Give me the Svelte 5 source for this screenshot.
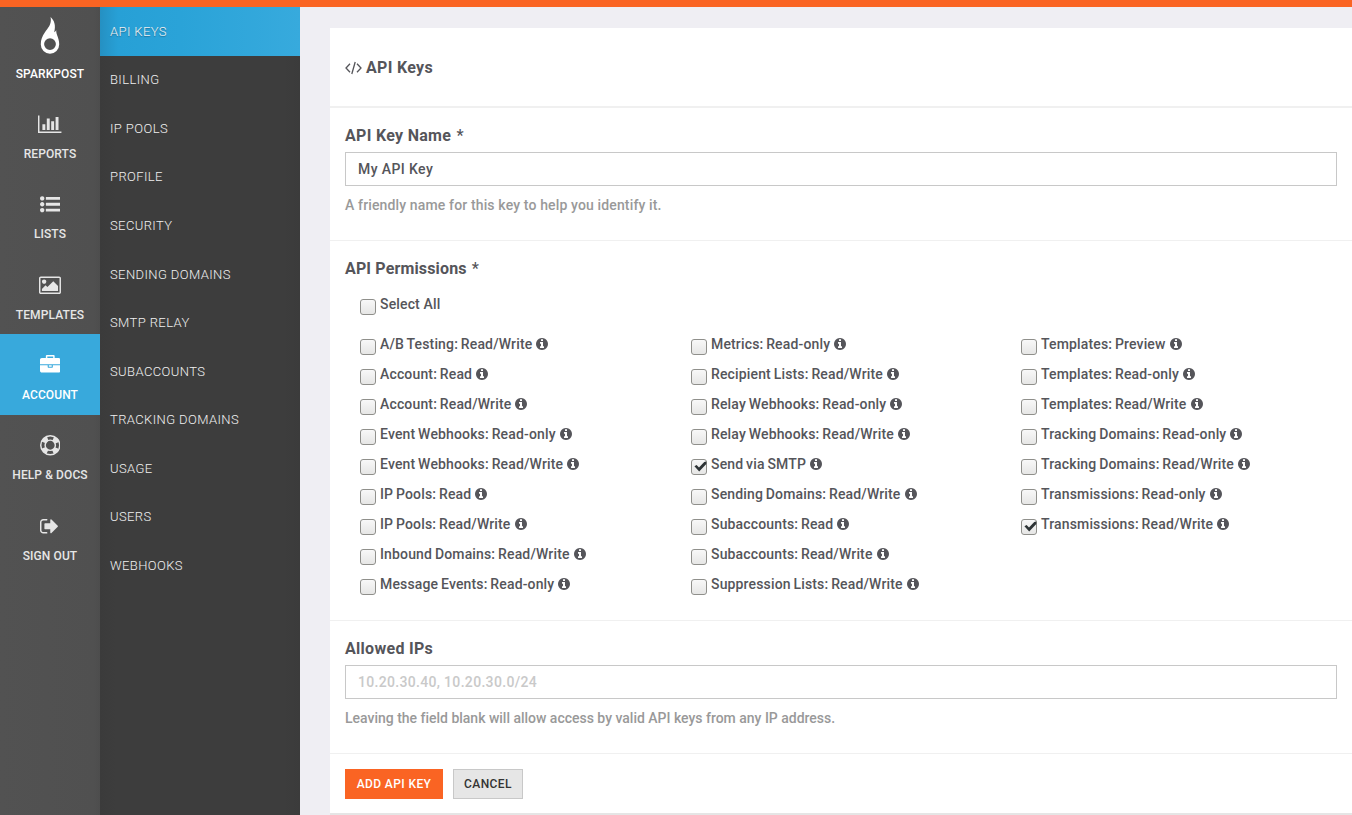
<script>
  const nav = [
    { label: 'REPORTS', icon: 'chart', w: 2048, p: 'M640 896v512h-256v-512h256zm384-512v1024h-256v-1024h256zm1024 1152v128h-2048v-1536h128v1408h1920zm-640-896v768h-256v-768h256zm384-384v1152h-256v-1152h256z' },
    { label: 'LISTS', icon: 'list', w: 1792, p: 'M384 1408q0 80-56 136t-136 56-136-56-56-136 56-136 136-56 136 56 56 136zm0-512q0 80-56 136t-136 56-136-56-56-136 56-136 136-56 136 56 56 136zm1408 416v192q0 13-9.5 22.5t-22.5 9.5h-1216q-13 0-22.5-9.5t-9.5-22.5v-192q0-13 9.5-22.5t22.5-9.5h1216q13 0 22.5 9.5t9.5 22.5zm-1408-928q0 80-56 136t-136 56-136-56-56-136 56-136 136-56 136 56 56 136zm1408 416v192q0 13-9.5 22.5t-22.5 9.5h-1216q-13 0-22.5-9.5t-9.5-22.5v-192q0-13 9.5-22.5t22.5-9.5h1216q13 0 22.5 9.5t9.5 22.5zm0-512v192q0 13-9.5 22.5t-22.5 9.5h-1216q-13 0-22.5-9.5t-9.5-22.5v-192q0-13 9.5-22.5t22.5-9.5h1216q13 0 22.5 9.5t9.5 22.5z' },
    { label: 'TEMPLATES', icon: 'image', w: 1920, p: 'M640 576q0 80-56 136t-136 56-136-56-56-136 56-136 136-56 136 56 56 136zm1024 384v448h-1408v-192l320-320 160 160 512-512zm96-704h-1600q-13 0-22.5 9.5t-9.5 22.5v1216q0 13 9.5 22.5t22.5 9.5h1600q13 0 22.5-9.5t9.5-22.5v-1216q0-13-9.5-22.5t-22.5-9.5zm160 32v1216q0 66-47 113t-113 47h-1600q-66 0-113-47t-47-113v-1216q0-66 47-113t113-47h1600q66 0 113 47t47 113z' },
    { label: 'ACCOUNT', icon: 'briefcase', w: 1792, active: true, p: 'M640 256h512v-128h-512v128zm1152 640v480q0 66-47 113t-113 47h-1472q-66 0-113-47t-47-113v-480h672v160q0 26 19 45t45 19h320q26 0 45-19t19-45v-160h672zm-768 0v128h-256v-128h256zm768-480v384h-1792v-384q0-66 47-113t113-47h352v-160q0-40 28-68t68-28h576q40 0 68 28t28 68v160h352q66 0 113 47t47 113z' },
    { label: 'HELP & DOCS', icon: 'ring', w: 1792, p: '' },
    { label: 'SIGN OUT', icon: 'out', w: 1664, p: 'M640 1440q0 4 1 20t.5 26.5-3 23.5-10 19.5-20.5 6.5h-320q-119 0-203.5-84.5t-84.5-203.5v-704q0-119 84.5-203.5t203.5-84.5h320q13 0 22.5 9.5t9.5 22.5q0 4 1 20t.5 26.5-3 23.5-10 19.5-20.5 6.5h-320q-66 0-113 47t-47 113v704q0 66 47 113t113 47h312l11.5 1 11.5 3 8 5.5 7 9 2 13.5zm928-544q0 26-19 45l-544 544q-19 19-45 19t-45-19-19-45v-288h-448q-26 0-45-19t-19-45v-384q0-26 19-45t45-19h448v-288q0-26 19-45t45-19 45 19l544 544q19 19 19 45z' },
  ];
  const sub = ['API KEYS', 'BILLING', 'IP POOLS', 'PROFILE', 'SECURITY', 'SENDING DOMAINS', 'SMTP RELAY', 'SUBACCOUNTS', 'TRACKING DOMAINS', 'USAGE', 'USERS', 'WEBHOOKS'];
  const columns = [
    ['A/B Testing: Read/Write', 'Account: Read', 'Account: Read/Write', 'Event Webhooks: Read-only', 'Event Webhooks: Read/Write', 'IP Pools: Read', 'IP Pools: Read/Write', 'Inbound Domains: Read/Write', 'Message Events: Read-only'],
    ['Metrics: Read-only', 'Recipient Lists: Read/Write', 'Relay Webhooks: Read-only', 'Relay Webhooks: Read/Write', 'Send via SMTP', 'Sending Domains: Read/Write', 'Subaccounts: Read', 'Subaccounts: Read/Write', 'Suppression Lists: Read/Write'],
    ['Templates: Preview', 'Templates: Read-only', 'Templates: Read/Write', 'Tracking Domains: Read-only', 'Tracking Domains: Read/Write', 'Transmissions: Read-only', 'Transmissions: Read/Write'],
  ];
  const checked = new Set(['Send via SMTP', 'Transmissions: Read/Write']);
  let name = $state('My API Key');
</script>

{#snippet box(on)}
  <span class="box" role="checkbox" aria-checked={on} tabindex="-1">
    {#if on}
      <svg viewBox="0 0 16 16"><path d="M3.400 7.200 5.600 6.100 8 8.600 13.200 3 15.300 2.400V5L8.200 12.600Z" fill="#2e3436" /></svg>
    {/if}
  </span>
{/snippet}

<div class="page">
  <nav class="main-nav">
    <a class="brand" href="#home">
      <svg class="flame" viewBox="0 0 20 37"><path fill-rule="evenodd" d="M10.600 0C14.400 3.500 16 8.500 14.200 15.200C15.300 14.800 15.800 13.900 16.200 13C16 18 19.200 20.500 19.200 27.500A9.200 9.200 0 0 1 .8 27.500C.8 22.500 2.200 19.500 4.800 15.500C7.800 11 12 7.500 10.600 0ZM10 21.200A5.900 5.900 0 1 0 10 33A5.900 5.900 0 1 0 10 21.200Z" /></svg>
      <span>SPARKPOST</span>
    </a>
    {#each nav as n}
      <a class="item" class:active={n.active} href="#{n.icon}">
        <svg class="nav-icon" viewBox="0 0 {n.w} 1792" style="width:{n.w * 0.01145}px">
          {#if n.icon === 'ring'}
            <circle cx="896" cy="896" r="832" fill="none" stroke="currentColor" stroke-width="128" />
            <circle cx="896" cy="896" r="448" fill="none" stroke="currentColor" stroke-width="128" />
            <circle cx="896" cy="896" r="640" fill="none" stroke="currentColor" stroke-width="400" stroke-dasharray="502.650 502.650" stroke-dashoffset="-251.330" />
          {:else}
            <path d={n.p} />
          {/if}
        </svg>
        <span>{n.label}</span>
      </a>
    {/each}
  </nav>

  <nav class="sub-nav">
    {#each sub as s, i}
      <a class:active={i === 0} href="#sub-{i}">{s}</a>
    {/each}
  </nav>

  <main>
    <form class="panel">
      <header>
        <svg class="code" viewBox="0 0 17 14"><path d="M5 2.800 1 7 5 11.200M12 2.800 16 7 12 11.200M10.200 1 6.800 13" fill="none" stroke="currentColor" stroke-width="1.300" /></svg>
        <h1>API Keys</h1>
      </header>
      <section class="name">
        <h2>API Key Name <i>*</i></h2>
        <input type="text" bind:value={name} />
        <p>A friendly name for this key to help you identify it.</p>
      </section>
      <section class="perms">
        <h2>API Permissions <i>*</i></h2>
        <div class="perm all">{@render box(false)}<span class="t">Select All</span></div>
        <div class="columns">
          {#each columns as col}
            <div class="col">
              {#each col as p}
                <div class="perm">
                  {@render box(checked.has(p))}<span class="t">{p}</span>
                  <svg class="info" viewBox="0 0 1536 1536"><path transform="translate(-128 -128)" d="M1152 1376v-160q0-14-9-23t-23-9h-96v-512q0-14-9-23t-23-9h-320q-14 0-23 9t-9 23v160q0 14 9 23t23 9h96v320h-96q-14 0-23 9t-9 23v160q0 14 9 23t23 9h448q14 0 23-9t9-23zm-128-896v-160q0-14-9-23t-23-9h-192q-14 0-23 9t-9 23v160q0 14 9 23t23 9h192q14 0 23-9t9-23zm640 416q0 209-103 385.500t-279.500 279.500-385.500 103-385.500-103-279.500-279.500-103-385.500 103-385.500 279.500-279.500 385.500-103 385.500 103 279.500 279.500 103 385.500z" /></svg>
                </div>
              {/each}
            </div>
          {/each}
        </div>
      </section>
      <section class="ips">
        <h2>Allowed IPs</h2>
        <input type="text" placeholder="10.20.30.40, 10.20.30.0/24" />
        <p class="tight">Leaving the field blank will allow access by valid API keys from any IP address.</p>
      </section>
      <footer>
        <button type="button" class="primary">ADD API KEY</button>
        <button type="button">CANCEL</button>
      </footer>
    </form>
  </main>
</div>

<style>
  :global(body) { margin: 0; overflow: hidden; }
  * { box-sizing: border-box; }
  svg { display: block; fill: currentColor; flex: none; }
  a { text-decoration: none; }
  .page {
    height: 815px; overflow: hidden; display: grid; grid-template-columns: 100px 200px 1fr;
    border-top: 7px solid #fa6423; background: #efeef3; color: #55555a;
    font-family: Roboto, sans-serif; font-weight: 500; font-size: 14px;
  }
  .main-nav { background: linear-gradient(90deg, #525252, #505050 94%, #4d4d4d); font-size: 12px; letter-spacing: .1px; }
  .main-nav a { display: flex; flex-direction: column; align-items: center; color: #e6e6e6; height: 80.330px; line-height: 16px; }
  .main-nav .brand { color: #fff; height: 86.400px; padding-top: 10px; }
  .flame { width: 20px; height: 37px; margin-bottom: 12px; }
  .item { padding-top: 20.500px; }
  .nav-icon { height: 20.520px; margin-bottom: 11.700px; }
  .main-nav .active { background: #38a9dc; color: #fff; }
  .sub-nav { background: linear-gradient(90deg, #3b3b3b, #3d3d3d 8%, #3d3d3d 92%, #3b3b3b); }
  .sub-nav a {
    display: flex; align-items: center; height: 48.560px; padding-left: 10px; color: #f0f0f0;
    font-size: 13px; font-weight: 300; letter-spacing: .4px;
  }
  .sub-nav .active { background: linear-gradient(90deg, #2590c2, #27a0d6 9%, #2aa3d8 40%, #37aadd); text-shadow: 0 1px 1px #1d6f98; }
  main { padding: 21px 0 0 30px; min-width: 0; }
  .panel { height: 787px; background: #fff; border-bottom: 2px solid #e5e5e5; }
  header { height: 80px; border-bottom: 2px solid #f0f0f0; display: flex; align-items: center; padding: 1px 0 0 15px; gap: 4px; }
  h1, h2 { margin: 0; font-size: 16px; line-height: 20px; font-weight: 700; letter-spacing: .3px; }
  h1 { padding-top: 1px; }
  h2 i { font-style: normal; font-weight: 500; margin-left: 1px; }
  .code { width: 17px; height: 14px; }
  section { padding: 18px 15px 0; border-bottom: 1px solid #f0f0f0; }
  .name { height: 133px; }
  .perms { height: 380px; }
  .perms h2 { letter-spacing: .15px; }
  .ips { height: 133px; }
  input {
    display: block; width: 992px; height: 34px; margin: 6px 0 0; padding: 0 12px; border: 1px solid #c8c8c8; border-radius: 0;
    background: #fff; color: #55555a; font: 500 14px Roboto, sans-serif; letter-spacing: .4px;
  }
  input::placeholder { color: #c9c9c9; opacity: 1; letter-spacing: .32px; }
  p { margin: 9px 0 0; color: #999; line-height: 20px; letter-spacing: .14px; }
  .tight { letter-spacing: -.01px; }
  .perm { display: flex; align-items: center; height: 30px; padding-bottom: 1px; letter-spacing: .15px; word-spacing: -.8px; }
  .all { margin: 10px 0 10px 15px; word-spacing: 0; }
  .columns { display: grid; grid-template-columns: 331px 330px 1fr; padding-left: 15px; }
  .box {
    width: 16px; height: 16px; margin: 6px 4px 0 0; border: 1px solid #8f8f8b; border-radius: 3px; flex: none;
    background: linear-gradient(#f8f8f8, #e6e6e5);
  }
  .box svg { width: 16px; height: 16px; margin: -1px; }
  .info { width: 12px; height: 12px; margin-left: 4px; }
  footer { display: flex; gap: 10px; padding: 15px; }
  button {
    height: 30px; width: 70px; padding: 0; border: 1px solid #c8c8c8; background: #e6e6e6; color: #333;
    font: 500 12px Roboto, sans-serif; letter-spacing: .4px;
  }
  .primary { width: 98px; border-color: #fa6423; background: #fa6423; color: #fff; }
</style>
